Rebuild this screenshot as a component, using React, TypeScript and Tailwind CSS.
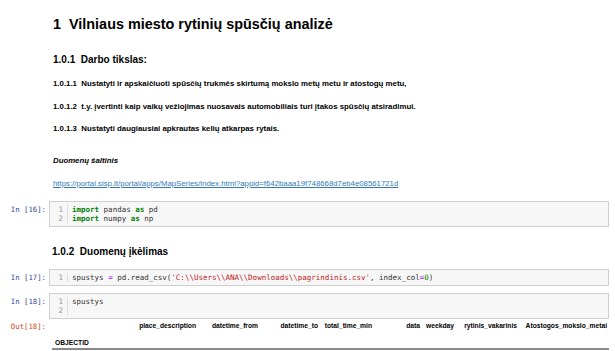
const sans = "font-['Liberation_Sans',Arial,sans-serif]";
const mono = "font-['DejaVu_Sans_Mono',monospace]";

function Prompt({ label, out }: { label: string; out?: boolean }) {
  return (
    <div
      className={`w-[46px] shrink-0 text-right text-[7.3px] leading-[9px] pr-0 ${mono} ${
        out ? "text-[#d84315]" : "text-[#303f9f]"
      }`}
    >
      {label}
    </div>
  );
}

function CodeCell({ n, lines }: { n: number; lines: React.ReactNode[] }) {
  return (
    <div className="flex items-start">
      <div className="pt-[4px]">
        <Prompt label={`In [${n}]:`} />
      </div>
      <div className="ml-[3px] mr-[6px] flex flex-1 border border-[#cfcfcf] bg-[#f7f7f7] py-[3px]">
        <div className={`w-[18px] shrink-0 border-r border-[#dddddd] pr-[4px] text-right text-[7.5px] leading-[9px] text-[#999999] ${mono}`}>
          {lines.map((_, i) => (
            <div key={i}>{i + 1}</div>
          ))}
        </div>
        <div className={`pl-[4px] text-[7.5px] leading-[9px] text-[#333333] ${mono}`}>
          {lines.map((l, i) => (
            <div key={i} className="whitespace-pre">
              {l}
            </div>
          ))}
        </div>
      </div>
    </div>
  );
}

const kw = "font-bold text-[#008000]";
const str = "text-[#ba2121]";
const op = "text-[#aa22ff]";

const cols = [
  { name: "place_description", w: "w-[96px]" },
  { name: "datetime_from", w: "w-[62px]" },
  { name: "datetime_to", w: "w-[60px]" },
  { name: "total_time_min", w: "w-[54px]" },
  { name: "data", w: "w-[48px]" },
  { name: "weekday", w: "w-[34px]" },
  { name: "rytinis_vakarinis", w: "w-[63px]" },
  { name: "Atostogos_mokslo_metai", w: "w-[90px]" },
];

export default function App() {
  return (
    <div className={`h-[351px] w-[615px] overflow-hidden bg-white text-black ${sans}`}>
      <div className="pl-[53px]">
        <h1 className="pt-[16px] text-[14.4px] font-bold leading-[16px]">
          1&nbsp;&nbsp;Vilniaus miesto rytinių spūsčių analizė
        </h1>
        <h3 className="mt-[22px] text-[10px] font-bold leading-[12px]">1.0.1&nbsp;&nbsp;Darbo tikslas:</h3>
        <h4 className="mt-[13px] text-[7.85px] font-bold leading-[10px]">
          1.0.1.1&nbsp;&nbsp;Nustatyti ir apskaičiuoti spūsčių trukmės skirtumą mokslo metų metu ir atostogų metu,
        </h4>
        <h4 className="mt-[12.5px] text-[7.85px] font-bold leading-[10px]">
          1.0.1.2&nbsp;&nbsp;t.y. įvertinti kaip vaikų vežiojimas nuosavais automobiliais turi įtakos spūsčių atsiradimui.
        </h4>
        <h4 className="mt-[12.5px] text-[7.85px] font-bold leading-[10px]">
          1.0.1.3&nbsp;&nbsp;Nustatyti daugiausiai apkrautas kelių atkarpas rytais.
        </h4>
        <p className="mt-[22px] text-[7.8px] font-bold italic leading-[10px]">Duomenų šaltinis</p>
        <p className="mt-[13px] text-[7.8px] leading-[10px]">
          <a className="text-[#337ab7] underline">
            https://portal.sisp.lt/portal/apps/MapSeries/index.html?appid=f642baaa19f748668d7eb4e08561721d
          </a>
        </p>
      </div>

      <div className="mt-[12px]">
        <CodeCell
          n={16}
          lines={[
            <>
              <span className={kw}>import</span> pandas <span className={kw}>as</span> pd
            </>,
            <>
              <span className={kw}>import</span> numpy <span className={kw}>as</span> np
            </>,
          ]}
        />
      </div>

      <h3 className="ml-[52px] mt-[19px] text-[10px] font-bold leading-[12px]">1.0.2&nbsp;&nbsp;Duomenų įkėlimas</h3>

      <div className="mt-[11px]">
        <CodeCell
          n={17}
          lines={[
            <>
              spustys <span className={op}>=</span> pd.read_csv(
              <span className={str}>'C:\\Users\\ANA\\Downloads\\pagrindinis.csv'</span>, index_col
              <span className={op}>=</span>
              <span className="text-[#008800]">0</span>)
            </>,
          ]}
        />
      </div>

      <div className="mt-[7px]">
        <CodeCell n={18} lines={["spustys", ""]} />
      </div>

      <div className="mt-[2px] flex items-start">
        <div className="pt-[1px]">
          <Prompt label="Out[18]:" out />
        </div>
        <div className="ml-[6px] text-[6.7px] font-bold leading-[10px]">
          <div className="flex">
            <div className="w-[48px]" />
            {cols.map((c) => (
              <div key={c.name} className={`${c.w} whitespace-nowrap text-right`}>
                {c.name}
              </div>
            ))}
          </div>
          <div className="mt-[7px] flex border-b-2 border-[#8a8a8a]">
            <div className="pl-[3px]">OBJECTID</div>
            <div className="w-[520px]" />
          </div>
        </div>
      </div>
    </div>
  );
}
